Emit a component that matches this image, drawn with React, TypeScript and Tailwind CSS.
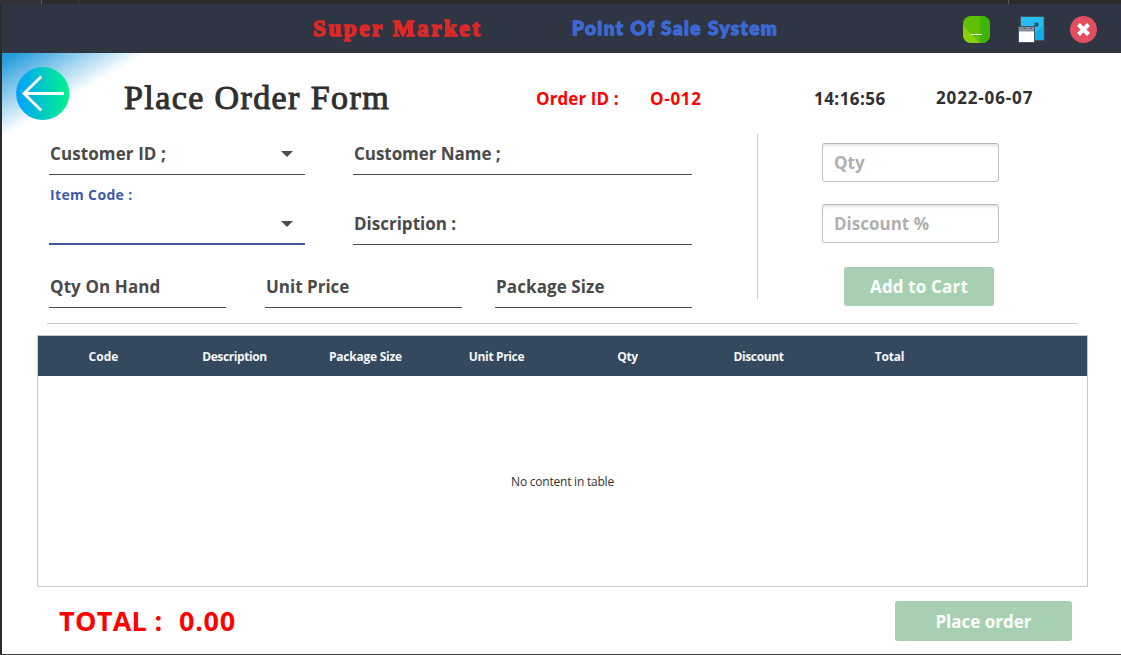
import React from "react";

const ui = "font-['Open_Sans','Noto_Sans',sans-serif] font-bold whitespace-nowrap";

type FieldProps = { label: string; className: string; tracking: string; combo?: boolean };

function Caret() {
  return (
    <svg width="12" height="6" viewBox="0 0 12 6" className="mr-3 shrink-0">
      <path d="M0 0H12L6 6Z" fill="#4d4d4d" />
    </svg>
  );
}

function Field({ label, className, tracking, combo }: FieldProps) {
  return (
    <div className={`flex h-[42px] items-center justify-between border-b border-[#4d4d4d] pl-px ${className}`}>
      <span className={`${ui} ${tracking} text-[17px] leading-6 text-[#4a4a4a]`}>{label}</span>
      {combo && <Caret />}
    </div>
  );
}

function MinimizeIcon() {
  return (
    <svg width="28" height="28" viewBox="0 0 28 28">
      <defs>
        <clipPath id="min-clip">
          <rect x="0" y="0" width="27" height="27" rx="8" />
        </clipPath>
      </defs>
      <g clipPath="url(#min-clip)">
        <path d="M0 0H28V28H0Z" fill="#5fbf05" />
        <path d="M0 10L17 27H0Z" fill="#88cf05" />
        <path d="M17 0H28V28H17Z" fill="#3fb408" />
      </g>
      <path d="M8 18.5H19" stroke="#fff" />
    </svg>
  );
}

function RestoreIcon() {
  return (
    <svg width="28" height="28" viewBox="0 0 28 28">
      <path d="M2.5 .5H26V24.5H2.5Z" fill="#27bdf3" stroke="#46535f" />
      <path d="M17 17L25.5 9V24H17Z" fill="#0eafe9" />
      <path d="M16.5 7.5H19.5V10.5M19 8L16 11" stroke="#2b4250" strokeWidth="1.5" fill="none" />
      <path d="M.5 10.5H16.5V26.5H.5Z" fill="#fff" stroke="#46535f" />
      <path d="M1 11H16V15.5H1Z" fill="#87909a" />
      <path d="M6 12.5H7.5M12 12.5H13.5" stroke="#46535f" strokeWidth="1.2" />
    </svg>
  );
}

function CloseIcon() {
  return (
    <svg width="28" height="28" viewBox="0 0 28 28">
      <circle cx="13.5" cy="13.5" r="13.5" fill="#e04f5f" />
      <path d="M8.5 8.5L18.5 18.5M18.5 8.5L8.5 18.5" stroke="#fff" strokeWidth="4" />
    </svg>
  );
}

function BackIcon() {
  return (
    <svg width="54" height="54" viewBox="0 0 54 54">
      <defs>
        <linearGradient id="back-fill">
          <stop offset="0" stopColor="#00a1ff" />
          <stop offset="1" stopColor="#00f38a" />
        </linearGradient>
      </defs>
      <circle cx="26.7" cy="26.5" r="26.6" fill="url(#back-fill)" />
      <path d="M48 26.5H8M25.3 9.5L8 26.5L25.3 43.5" fill="none" stroke="#fff" strokeWidth="3" />
    </svg>
  );
}

const columns = [
  { name: "Code", tracking: "tracking-[0px]" },
  { name: "Description", tracking: "tracking-[-0.4px]" },
  { name: "Package Size", tracking: "tracking-[-0.25px]" },
  { name: "Unit Price", tracking: "tracking-[-0.35px]" },
  { name: "Qty", tracking: "tracking-[-0.3px]" },
  { name: "Discount", tracking: "tracking-[-0.4px]" },
  { name: "Total", tracking: "tracking-[-0.2px]" },
];

export default function App() {
  return (
    <div className="flex h-[655px] w-[1121px] flex-col overflow-hidden bg-[#2b2b2b]">
      <div className="flex h-1 shrink-0">
        <div className="w-[42px] border-r border-[#555] bg-[#313335]" />
        <div className="w-[37px] border-r border-[#3c3c3c]" />
        <div className="w-[930px] border-r border-[#555]" />
      </div>
      <header className="ml-0.5 flex h-[49px] shrink-0 items-start bg-[#2f3542]">
        <div className="ml-[311px] w-[259px] pt-[11px] font-['Liberation_Serif',serif] text-[23px] leading-7 font-bold whitespace-nowrap text-[#de2828] tracking-[2.6px] [-webkit-text-stroke:1.5px_#de2828]">
          Super Market
        </div>
        <div className="w-[389px] pt-[10px] font-['Lato',sans-serif] text-[19px] leading-7 font-black whitespace-nowrap text-[#3c69d1] tracking-[1.45px] [-webkit-text-stroke:1.3px_#3c69d1]">
          Point Of Sale System
        </div>
        <div className="mt-3 flex w-40">
          <div className="w-[57px] pl-0.5"><MinimizeIcon /></div>
          <div className="w-[52px]"><RestoreIcon /></div>
          <CloseIcon />
        </div>
      </header>
      <main className="ml-0.5 flex h-[601px] shrink-0 flex-col bg-white bg-[linear-gradient(150deg,#1e97da_0px,#2a9edc_8px,#ffffff_73px)]">
        <div className="flex h-20 shrink-0 items-start">
          <div className="ml-3.5 w-[108px] pt-3.5"><BackIcon /></div>
          <h1 className="w-[412px] pt-[25px] font-['Liberation_Serif',serif] text-[34px] leading-10 whitespace-nowrap text-[#2f2f2f] tracking-[1.4px] [-webkit-text-stroke:1px_#2f2f2f]">
            Place Order Form
          </h1>
          <div className={`${ui} w-[114px] pt-[34px] text-[17px] leading-6 tracking-[0.1px] text-[#f00]`}>Order ID :</div>
          <div className={`${ui} w-[164px] pt-[34px] text-[17px] leading-6 tracking-[0.7px] text-[#f00]`}>O-012</div>
          <div className={`${ui} w-[122px] pt-[34px] text-[17px] leading-6 tracking-[0.45px] text-[#2f2f2f]`}>14:16:56</div>
          <div className={`${ui} pt-[33px] text-[17px] leading-6 tracking-[0.85px] text-[#2f2f2f]`}>2022-06-07</div>
        </div>
        <section className="ml-[47px] flex h-[190px] shrink-0">
          <div className="w-[643px]">
            <div className="flex justify-between">
              <Field label="Customer ID ;" className="w-64" tracking="tracking-[0.1px]" combo />
              <Field label="Customer Name ;" className="w-[339px]" tracking="tracking-[-0.05px]" />
            </div>
            <div className="flex h-[70px] items-end justify-between">
              <div className="flex h-[70px] w-64 flex-col border-b-2 border-[#3f59a9]">
                <span className={`${ui} mt-[10px] h-5 pl-px text-[14px] leading-5 tracking-[0.35px] text-[#3f59a9]`}>Item Code :</span>
                <div className="flex flex-1 items-center justify-end"><Caret /></div>
              </div>
              <Field label="Discription :" className="w-[339px]" tracking="tracking-[0px]" />
            </div>
            <div className="flex pt-[21px]">
              <Field label="Qty On Hand" className="w-[177px]" tracking="tracking-[0.1px]" />
              <Field label="Unit Price" className="ml-[39px] w-[197px]" tracking="tracking-[0px]" />
              <Field label="Package Size" className="ml-[33px] w-[197px]" tracking="tracking-[0.1px]" />
            </div>
          </div>
          <div className="mt-px ml-[65px] h-[165px] w-px bg-[#ccc]" />
          <div className="ml-16 pt-[10px]">
            <div className={`${ui} flex h-[39px] w-[177px] items-center rounded-[3px] border border-[#c5c5c5] border-t-[#b5b5b5] pl-[11px] text-[17px] text-[#b0b0b0] shadow-[inset_0_3px_3px_-1px_#e4e4e4]`}>Qty</div>
            <div className={`${ui} mt-[22px] flex h-[39px] w-[177px] items-center rounded-[3px] border border-[#c5c5c5] border-t-[#b5b5b5] pl-[11px] text-[17px] text-[#b0b0b0] shadow-[inset_0_3px_3px_-1px_#e4e4e4]`}>Discount %</div>
            <button className={`${ui} mt-6 ml-[22px] flex h-[39px] w-[150px] items-center justify-center rounded-[3px] bg-[#a6d0b1] text-[17px] tracking-[0.15px] text-white`}>Add to Cart</button>
          </div>
        </section>
        <div className="ml-[45px] h-px w-[1031px] shrink-0 bg-[#ccc]" />
        <section className="mt-[11px] ml-[35px] flex h-[252px] w-[1051px] shrink-0 flex-col border border-[#c8c8c8] bg-white">
          <div className="flex h-10 shrink-0 items-center bg-[#34495e] pt-0.5">
            {columns.map((c) => (
              <div key={c.name} className={`${ui} ${c.tracking} w-[131px] text-center text-[12px] text-[#f4f6f8]`}>{c.name}</div>
            ))}
          </div>
          <div className="flex flex-1 items-center justify-center pt-0.5 font-['Open_Sans','Noto_Sans',sans-serif] text-[12px] tracking-[-0.22px] text-[#333]">
            No content in table
          </div>
        </section>
        <footer className="flex pt-3.5">
          <div className={`${ui} ml-[57px] w-[120px] text-[27px] leading-10 tracking-[0.3px] text-[#f00]`}>TOTAL :</div>
          <div className={`${ui} w-[716px] text-[27px] leading-10 tracking-[0.7px] text-[#f00]`}>0.00</div>
          <button className={`${ui} flex h-10 w-[177px] items-center justify-center rounded-[3px] bg-[#a6d0b1] pt-0.5 text-[17px] text-white`}>Place order</button>
        </footer>
      </main>
      <div className="h-px bg-[#3c3f41]" />
    </div>
  );
}
